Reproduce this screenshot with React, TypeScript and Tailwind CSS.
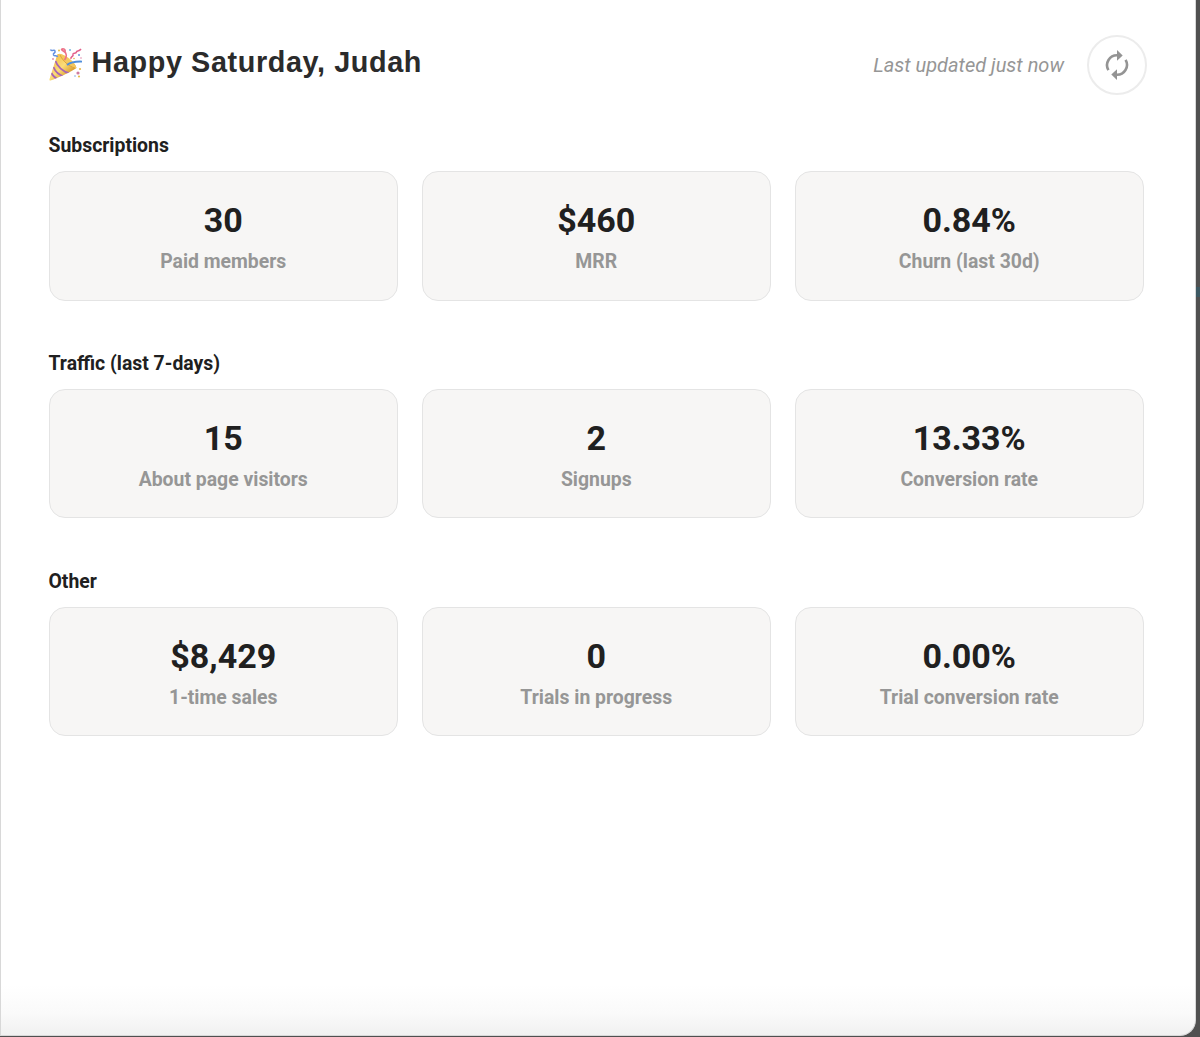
type Stat = { value: string; label: string };

const sections: { title: string; stats: Stat[] }[] = [
  {
    title: "Subscriptions",
    stats: [
      { value: "30", label: "Paid members" },
      { value: "$460", label: "MRR" },
      { value: "0.84%", label: "Churn (last 30d)" },
    ],
  },
  {
    title: "Traffic (last 7-days)",
    stats: [
      { value: "15", label: "About page visitors" },
      { value: "2", label: "Signups" },
      { value: "13.33%", label: "Conversion rate" },
    ],
  },
  {
    title: "Other",
    stats: [
      { value: "$8,429", label: "1-time sales" },
      { value: "0", label: "Trials in progress" },
      { value: "0.00%", label: "Trial conversion rate" },
    ],
  },
];

const PartyPopper = () => (
  <svg className="w-[34px] h-[34px] shrink-0" viewBox="0 0 34 34" fill="none">
    <defs>
      <linearGradient id="cone" x1="5" y1="12" x2="20" y2="27" gradientUnits="userSpaceOnUse">
        <stop stopColor="#f5c453" />
        <stop offset=".5" stopColor="#fbdc78" />
        <stop offset="1" stopColor="#d99b2c" />
      </linearGradient>
      <clipPath id="cone-clip">
        <path d="M8.500 6C15 5 26 13 27.500 20C22 24 9 30 1.500 32.500C.3 32.500.2 31.500.7 30.400Z" />
      </clipPath>
    </defs>
    <g clipPath="url(#cone-clip)">
      <path d="M0 0H34V34H0Z" fill="url(#cone)" />
      <path
        d="M6.500 13C8 18 14 24 21 25.500M4.500 19C6 23 10 27 15 28.500M2.500 25C4 28 6 30 9 31"
        stroke="#a765b4"
        strokeWidth="1.800"
      />
    </g>
    <ellipse cx="18.500" cy="13" rx="2.500" ry="11" transform="rotate(-51 18.500 13)" fill="#f3c75d" />
    <path d="M11 7C14 13 19 18 26 20" stroke="#dda23c" strokeWidth="1" />
    <path d="M18 17C22 14 26 13.300 33 13.600" stroke="#4f8edb" strokeWidth="1.900" />
    <path d="M15.500 12C18 9 18 5 15 3.500C12.500 2 11.500 1 14 .8C16 .8 17 3 15.500 5" stroke="#ed7288" strokeWidth="1.600" />
    <path d="M1.500 1.500C3 4.500 5 .500 6 3C7 5.500 3.500 4.500 4.500 7C5.500 9 8 6.500 8.500 9" stroke="#628fe0" strokeWidth="1.500" />
    <path d="M22 11C21 8 25 9 24 6.500C23.500 4.500 27 6 27.500 4C27.500 2 30 4 32 1" stroke="#e3608b" strokeWidth="1.500" />
    <circle cx="10" cy="2.500" r="1" fill="#e7bd42" />
    <circle cx="21" cy="2" r="1" fill="#73b6df" />
    <circle cx="4" cy="11" r="1" fill="#e391a9" />
    <circle cx="25" cy="10.500" r=".8" fill="#e5b448" />
    <circle cx="30" cy="7" r="1" fill="#6796df" />
    <circle cx="32" cy="10" r=".8" fill="#df8aaa" />
    <circle cx="31" cy="21" r="1.100" fill="#e7ba4c" />
    <circle cx="29" cy="25" r="1.600" fill="#cf7ca0" />
    <circle cx="30" cy="28.500" r="1.100" fill="#e7bd4c" />
    <circle cx="26" cy="28" r=".8" fill="#77a8e3" />
  </svg>
);

const RefreshIcon = () => (
  <svg className="size-8" viewBox="0 0 32 32" fill="none">
    <path d="M7.400 21.200A10 10 0 0 1 16.500 6.200" stroke="currentColor" strokeWidth="2.600" />
    <path d="M16 1L21.700 6.400L16 11.800Z" fill="currentColor" />
    <path d="M24.600 10.800A10 10 0 0 1 15.500 25.800" stroke="currentColor" strokeWidth="2.600" />
    <path d="M16 31L10.300 25.600L16 20.200Z" fill="currentColor" />
  </svg>
);

const StatCard = ({ value, label }: Stat) => (
  <div className="h-[129.5px] rounded-2xl border border-[#e4e4e4] bg-[#f7f6f5] pt-[27px] text-center">
    <div className="text-[34px] leading-[42px] font-bold text-[#202020]">{value}</div>
    <div className="mt-[7px] text-[19.4px] leading-7 font-bold text-[#969696]">{label}</div>
  </div>
);

const App = () => {
  return (
    <div className="relative h-[1037px] overflow-hidden bg-[#505050] pr-[4px] pb-px font-['Roboto',sans-serif]">
      <div className="absolute top-[287px] right-0 h-[10px] w-[4px] bg-[#3d5963]" />
      <main className="h-full rounded-br-[16px] border-l border-r border-b border-[#d8d8d8] bg-[linear-gradient(to_top,#f1f1f1_0,#fafafa_22px,#ffffff_50px)] pl-[47.5px] pr-[51px] pt-[35px]">
        <header className="flex h-[60px] items-center justify-between">
          <div className="flex items-center">
            <PartyPopper />
            <h1 className="ml-[9px] -mt-1.5 font-['Liberation_Sans',sans-serif] text-[28.8px] leading-9 font-bold tracking-[0.6px] text-[#2b2b2b]">
              Happy Saturday, Judah
            </h1>
          </div>
          <div className="-mr-[3px] flex items-center gap-[23px]">
            <span className="text-[20px] italic text-[#969696]">Last updated just now</span>
            <button
              aria-label="Refresh"
              className="flex size-[60px] items-center justify-center rounded-full border-2 border-[#ececec] bg-white text-[#949494]"
            >
              <RefreshIcon />
            </button>
          </div>
        </header>
        <div className="mt-9 flex flex-col gap-[48.25px]">
          {sections.map(({ title, stats }) => (
            <section key={title}>
              <h2 className="mb-3 pt-px text-[19.4px] leading-[27px] font-bold text-[#202020]">{title}</h2>
              <div className="grid grid-cols-3 gap-[23.5px]">
                {stats.map((stat) => (
                  <StatCard key={stat.label} {...stat} />
                ))}
              </div>
            </section>
          ))}
        </div>
      </main>
    </div>
  );
};

export default App;
